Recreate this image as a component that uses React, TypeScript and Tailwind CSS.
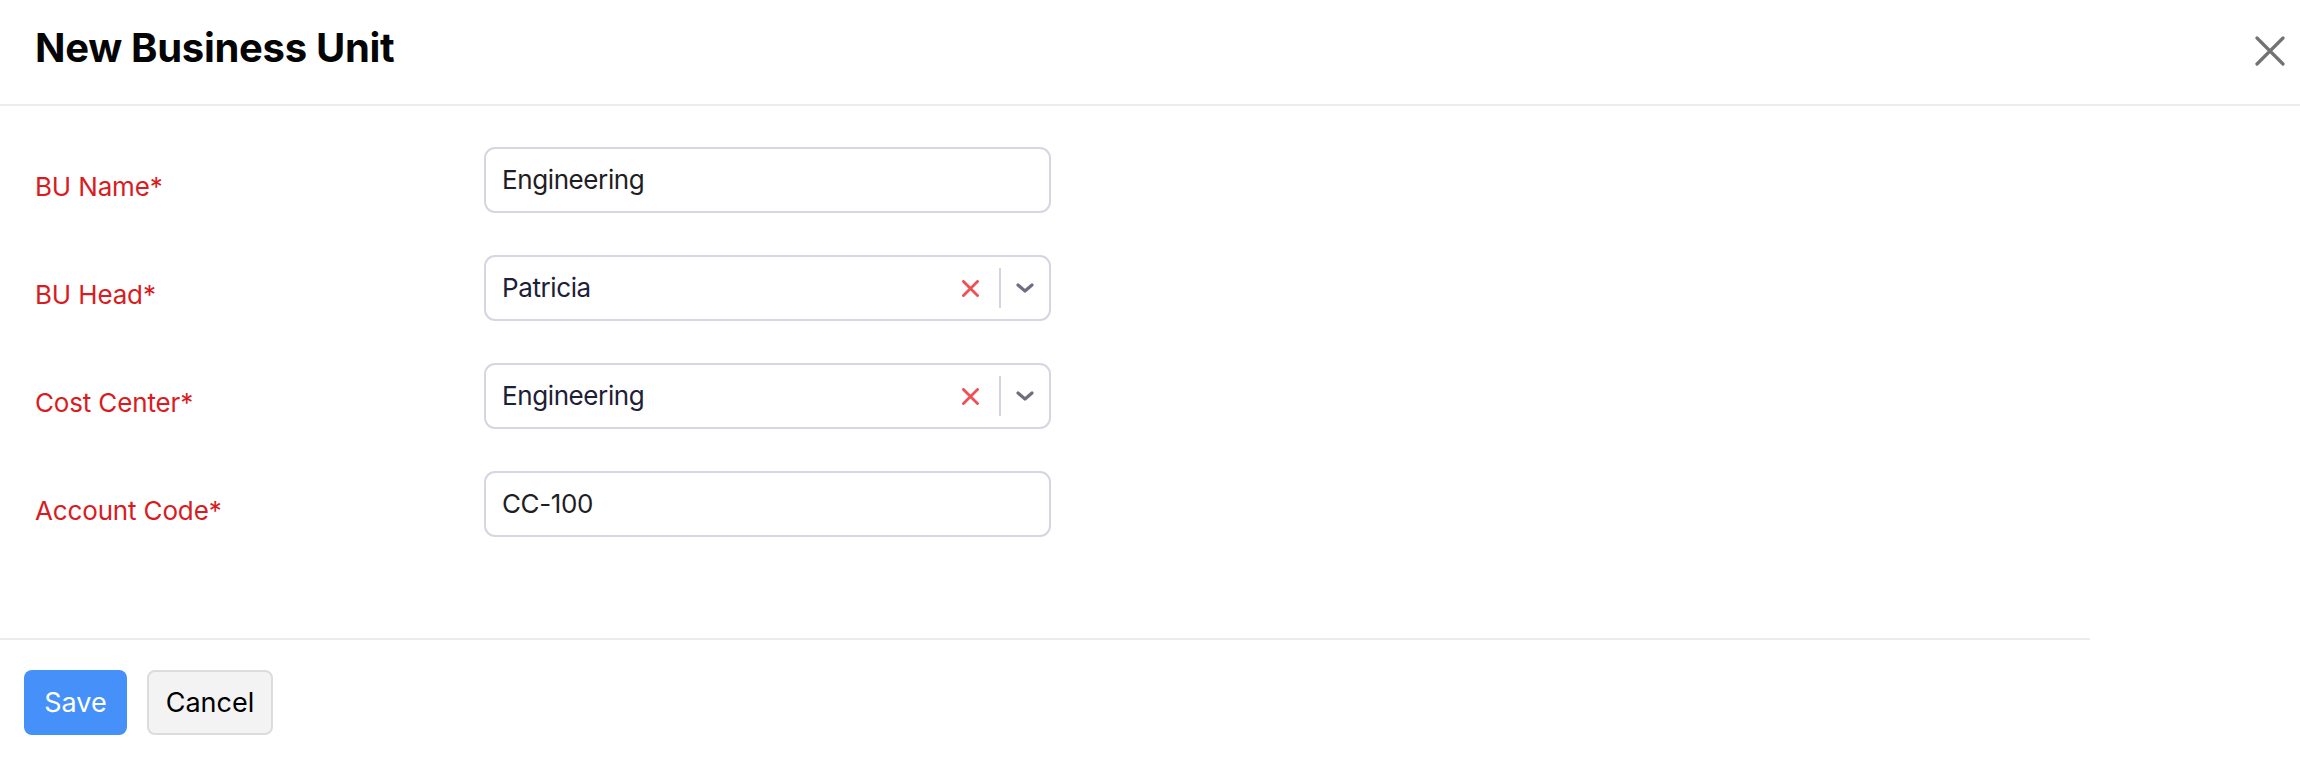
import React from 'react';

const fields = [
  { label: 'BU Name*', value: 'Engineering', select: false },
  { label: 'BU Head*', value: 'Patricia', select: true },
  { label: 'Cost Center*', value: 'Engineering', select: true },
  { label: 'Account Code*', value: 'CC-100', select: false },
];

function ClearIcon() {
  return (
    <svg width="17" height="17" viewBox="0 0 17 17" fill="none" stroke="#ef5057" strokeWidth="2.8" strokeLinecap="square">
      <path d="M1.5 1.5L15.5 15.5M15.5 1.5L1.5 15.5" />
    </svg>
  );
}

function ChevronIcon() {
  return (
    <svg width="18" height="10" viewBox="0 0 18 10" fill="none" stroke="#6f6e80" strokeWidth="3.2" strokeLinecap="round" strokeLinejoin="round">
      <path d="M2 2L9 8L16 2" />
    </svg>
  );
}

function CloseIcon() {
  return (
    <svg width="30" height="30" viewBox="0 0 30 30" fill="none" stroke="#737373" strokeWidth="3.2" strokeLinecap="round">
      <path d="M2 2L28 28M28 2L2 28" />
    </svg>
  );
}

export default function App() {
  return (
    <div className="w-[2300px] h-[760px] bg-white font-['Inter',_'Liberation_Sans',_sans-serif] overflow-hidden">
      <div className="flex justify-between h-[106px] pl-[35px] pr-[15px] border-b-2 border-[#ececec]">
        <h1 className="mt-[28px] text-[40px] leading-none font-bold tracking-[-0.3px] text-[#050505]">New Business Unit</h1>
        <button className="self-center mb-[2px]">
          <CloseIcon />
        </button>
      </div>

      <div className="w-[2090px]">
        <div className="flex flex-col gap-[42px] pt-[41px] pb-[101px] pl-[35px]">
          {fields.map((f) => (
            <div key={f.label} className="flex items-start">
              <label className="w-[449px] pt-[27px] text-[26px] leading-none tracking-[-0.15px] text-[#d81c1f]">{f.label}</label>
              <div className="flex items-center w-[567px] h-[66px] border-2 border-[#d6d5e2] rounded-[11px] bg-white">
                <span
                  className={
                    f.select
                      ? 'flex-1 pl-[16px] text-[26px] leading-none tracking-[-0.4px] text-[#1d2036]'
                      : 'flex-1 pl-[16px] text-[26px] leading-none tracking-[-0.4px] text-[#1e1e24]'
                  }
                >
                  {f.value}
                </span>
                {f.select && (
                  <div className="flex items-center h-full">
                    <div className="flex items-center justify-center w-[58px] h-full">
                      <ClearIcon />
                    </div>
                    <div className="w-[2px] h-[40px] bg-[#d3d2de]" />
                    <div className="flex items-center justify-center w-[48px] h-full">
                      <ChevronIcon />
                    </div>
                  </div>
                )}
              </div>
            </div>
          ))}
        </div>

        <div className="border-t-2 border-[#ebebeb] pt-[30px] pl-[24px] flex gap-[20px]">
          <button className="h-[65px] w-[103px] rounded-[8px] bg-[#4590f9] text-white text-[27px] leading-none">
            Save
          </button>
          <button className="h-[65px] w-[126px] rounded-[8px] bg-[#f3f3f3] border-2 border-[#dcdcdc] text-black text-[27px] leading-none">
            Cancel
          </button>
        </div>
      </div>
    </div>
  );
}
